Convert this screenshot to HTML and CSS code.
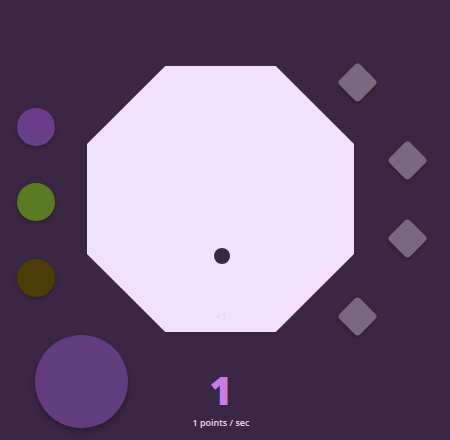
FILE: index.html
```html
<!DOCTYPE html>
<html>
<head>
<meta charset="utf-8">
<link rel="stylesheet" href="styles.css">
</head>
<body>
<div class="game">
  <div class="octagon">
    <span class="target"></span>
    <span class="float">+1</span>
  </div>
  <div class="upgrade u1"></div>
  <div class="upgrade u2"></div>
  <div class="upgrade u3"></div>
  <div class="upgrade u4"></div>
  <div class="swatch s1"></div>
  <div class="swatch s2"></div>
  <div class="swatch s3"></div>
  <div class="big-btn"></div>
  <div class="score">
    <div class="count">1</div>
    <div class="rate">1 points / sec</div>
  </div>
</div>
</body>
</html>
```
FILE: styles.css
```css
html, body {
  margin: 0;
  padding: 0;
  background: #3b2743;
  font-family: "Open Sans", "Noto Sans", sans-serif;
}
.game {
  position: relative;
  width: 450px;
  height: 440px;
  overflow: hidden;
}
.octagon {
  position: absolute;
  left: 87px;
  top: 66px;
  width: 267px;
  height: 266px;
  background: #f0e1fe;
  clip-path: polygon(29.3% 0, 70.7% 0, 100% 29.3%, 100% 70.7%, 70.7% 100%, 29.3% 100%, 0 70.7%, 0 29.3%);
}
.target {
  position: absolute;
  left: 127px;
  top: 182px;
  width: 16px;
  height: 16px;
  border-radius: 50%;
  background: #3b2743;
}
.float {
  position: absolute;
  left: 129px;
  top: 244px;
  font-size: 9px;
  color: #ddd0e8;
}
.upgrade {
  position: absolute;
  width: 29px;
  height: 29px;
  background: #78697f;
  border-radius: 4px;
  transform: rotate(45deg);
  box-shadow: 1px 2px 4px rgba(0,0,0,0.25);
}
.u1 { left: 343px; top: 68px; }
.u2 { left: 393px; top: 146px; }
.u3 { left: 393px; top: 224px; }
.u4 { left: 343px; top: 302px; }
.swatch {
  position: absolute;
  left: 17px;
  width: 38px;
  height: 38px;
  border-radius: 50%;
  box-shadow: 0 2px 4px rgba(0,0,0,0.25);
}
.s1 { top: 108px; background: #6a3d8a; }
.s2 { top: 183px; background: #5a7a22; }
.s3 { top: 259px; background: #4e3d06; }
.big-btn {
  position: absolute;
  left: 35px;
  top: 335px;
  width: 93px;
  height: 93px;
  border-radius: 50%;
  background: #623c7e;
  box-shadow: 0 3px 6px rgba(0,0,0,0.3);
}
.score {
  position: absolute;
  left: 171px;
  top: 366px;
  width: 100px;
  text-align: center;
}
.count {
  font-size: 39px;
  font-weight: 800;
  line-height: 48px;
  color: #c67de8;
}
.rate {
  font-size: 9px;
  font-weight: 600;
  color: #e8dff0;
  margin-top: 2px;
}
```
